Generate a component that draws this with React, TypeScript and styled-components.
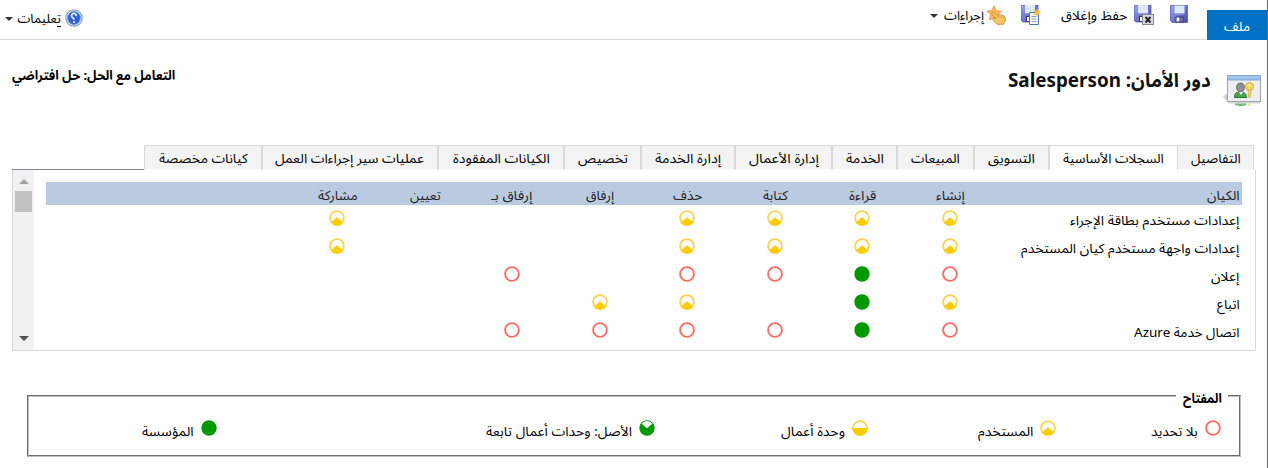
import React, { useLayoutEffect, useRef } from "react";
import styled, { createGlobalStyle } from "styled-components";

const Global = createGlobalStyle`
  * { box-sizing: border-box; }
  body { margin: 0; background: #fff; color: #000; overflow: hidden;
    font-family: "Segoe UI", "Noto Sans", "Noto Sans Arabic", "DejaVu Sans", sans-serif; font-size: 12px; }
`;

const Slot = styled.span<{ $w: number }>`
  display: block;
  flex: none;
  width: ${(p) => p.$w}px;
  white-space: nowrap;
`;
const Ink = styled.span<{ $bold?: boolean; $size?: number }>`
  display: inline-block;
  transform-origin: right center;
  line-height: 20px;
  font-size: ${(p) => p.$size ?? 13}px;
  font-weight: ${(p) => (p.$bold ? 700 : 400)};
`;
const AccessKey = styled.span`
  text-decoration: underline;
  text-underline-offset: 3px;
  text-decoration-skip-ink: none;
`;

/* A label condensed to the width of its slot. */
function Label({ w, bold, size, children }: { w: number; bold?: boolean; size?: number; children: React.ReactNode }) {
  const ref = useRef<HTMLSpanElement>(null);
  useLayoutEffect(() => {
    const el = ref.current;
    if (el) el.style.transform = `scaleX(${w / el.offsetWidth})`;
  }, [w]);
  return (
    <Slot $w={w}>
      <Ink ref={ref} $bold={bold} $size={size}>{children}</Ink>
    </Slot>
  );
}

const Page = styled.div`
  width: 1268px;
  height: 468px;
  border-right: 1px solid #686868;
  direction: rtl;
  display: flex;
  flex-direction: column;
`;
const Ribbon = styled.header`
  height: 40px;
  flex: none;
  display: flex;
  border-bottom: 1px solid #d9d9d9;
`;
const FileTab = styled.div`
  width: 60px;
  height: 30px;
  margin-top: 10px;
  padding: 6px 17px 0;
  background: #0072c6;
  color: #fff;
`;
const Tool = styled.div<{ $before: number; $gap?: number }>`
  display: flex;
  align-items: flex-start;
  gap: ${(p) => p.$gap ?? 6}px;
  margin-right: ${(p) => p.$before}px;
  padding-top: 5px;
  height: 32px;
`;
const Help = styled(Tool)`
  margin-right: auto;
  margin-left: 5px;
  padding-top: 8px;
`;
const HelpDrop = styled.span`
  padding-top: 1px;
`;
const Caret = styled.span<{ $top: number }>`
  border: 4px solid transparent;
  border-top: 4px solid #333;
  border-bottom: 0;
  margin-top: ${(p) => p.$top}px;
`;
const TitleBar = styled.div`
  height: 105px;
  flex: none;
  display: flex;
  justify-content: space-between;
  padding: 25px 6px 0 12px;
`;
const TitleGroup = styled.div`
  display: flex;
  gap: 10px;
  color: #111;
`;
const IconDrop = styled.span`
  padding-top: 9px;
`;
const TitleText = styled.div`
  padding-top: 5px;
`;

const Tabs = styled.nav`
  display: flex;
  height: 25px;
  flex: none;
  margin: 0 11px 0 12px;
  padding-right: 2px;
`;
const Tab = styled.div<{ $w: number; $active?: boolean }>`
  width: ${(p) => p.$w}px;
  height: 25px;
  flex: none;
  display: flex;
  justify-content: center;
  padding-top: 2px;
  background: ${(p) => (p.$active ? "#fff" : "#f3f3f3")};
  border: 1px solid #d9d9d9;
  border-bottom: ${(p) => (p.$active ? "0" : "1px solid #fafafa")};
  ${(p) => p.$active && "border-right: 0;"}
`;
const TabsRest = styled.div`
  flex: 1;
  border-bottom: 1px solid #85858f;
`;
const Panel = styled.section`
  height: 181px;
  flex: none;
  margin: 0 11px 0 12px;
  border: 1px solid #d9d9d9;
  border-top: 0;
  display: flex;
`;
const Grid = styled.div`
  flex: 1;
  padding: 12px 13px 0 12px;
`;
const HeadRow = styled.div`
  display: flex;
  height: 23px;
  background: #bacbe1;
  color: #222;
  padding: 3px 2px 0 0;
`;
const Row = styled.div`
  display: flex;
  height: 28px;
`;
const Entity = styled.div<{ $head?: boolean }>`
  width: ${(p) => (p.$head ? 246.4 : 248.4)}px;
  flex: none;
  padding: ${(p) => (p.$head ? 0 : "5px 2.5px 0 0")};
`;
const Cell = styled.div`
  width: 87.5px;
  flex: none;
  display: flex;
  justify-content: center;
  padding-top: 5px;
`;
const HeadCell = styled(Cell)`
  padding-top: 0;
`;
const Scrollbar = styled.div`
  width: 21px;
  background: #f1f1f1;
  display: flex;
  flex-direction: column;
  align-items: center;
  padding: 9px 0 9px;
`;
const Arrow = styled.span<{ $up?: boolean }>`
  border: 5px solid transparent;
  ${(p) => (p.$up ? "border-bottom-color: #a3a3a3; border-top: 0;" : "border-top-color: #505050; border-bottom: 0; margin-top: auto;")}
`;
const Thumb = styled.span`
  width: 17px;
  height: 21px;
  margin-top: 7px;
  background: #c1c1c1;
`;

const Key = styled.fieldset`
  margin: 35px 26px 0 27px;
  height: 71px;
  flex: none;
  padding: 0 18px 0 0;
  min-width: 0;
  border: 2px groove #c0c0c0;
`;
const KeyTitle = styled.legend`
  height: 20px;
  margin-right: -7px;
  padding: 2px 6.5px 0;
`;
const KeyRow = styled.div`
  display: flex;
  padding-top: 14px;
`;
const KeyItem = styled.div<{ $w: number }>`
  width: ${(p) => p.$w}px;
  flex: none;
  display: flex;
  gap: 7px;
`;
const KeyLabel = styled.div`
  padding-top: 1px;
`;

type Level = "none" | "user" | "unit" | "parent" | "org";

function Dot({ level }: { level: Level }) {
  return (
    <svg width="16" height="16" viewBox="0 0 16 16">
      {level === "none" && <circle cx="8" cy="8" r="6.9" fill="#fff" stroke="#ff6d68" strokeWidth="1.9" />}
      {(level === "user" || level === "unit") && <circle cx="8" cy="8" r="6.9" fill="#fff" stroke="#ffd34f" strokeWidth="1.8" />}
      {level === "user" && <path d="M8 7.4 13.900 12.700A7.700 7.700 0 0 1 2.100 12.700Z" fill="#fc0" stroke="#fc0" strokeWidth=".6" />}
      {level === "unit" && <path d="M.3 8H15.700A7.700 7.700 0 0 1 .3 8Z" fill="#fc0" />}
      {(level === "org" || level === "parent") && <circle cx="8" cy="8" r="7.700" fill="#090" />}
      {level === "parent" && <path d="M8 8.200 2.600 3.700A6.700 6.700 0 0 1 13.400 3.700Z" fill="#fff" />}
    </svg>
  );
}

function Disk() {
  return (
    <g>
      <path d="M0 0H17V17H2L0 15Z" fill="url(#diskFill)" stroke="#5559b4" strokeWidth=".8" />
      <rect x="4" y="0" width="10" height="8" fill="#dfe8f8" />
      <path d="M4 8.500h10" stroke="#8d99d8" />
      <rect x="5" y="11" width="8" height="6" fill="#343b77" />
      <rect x="6" y="12" width="3" height="4" fill="#fff" />
      <rect x="10" y="12" width="2" height="4" fill="#8087bd" />
    </g>
  );
}
const DiskGradient = () => (
  <defs>
    <linearGradient id="diskFill" x1="0" y1="0" x2="1" y2="1">
      <stop stopColor="#9caaf0" />
      <stop offset="1" stopColor="#4345ae" />
    </linearGradient>
  </defs>
);
const SaveIcon = () => (
  <svg width="18" height="18" viewBox="-.5 -.5 18 18"><DiskGradient /><Disk /></svg>
);
const SaveCloseIcon = () => (
  <svg width="20" height="20" viewBox="0 0 20 20">
    <Disk />
    <rect x="8.500" y="9.500" width="11" height="10" fill="#d5d9dd" stroke="#858b92" />
    <path d="m11.500 12 5 5.500M16.500 12l-5 5.500" stroke="#222" strokeWidth="1.900" />
  </svg>
);
const SaveNewIcon = () => (
  <svg width="20" height="20" viewBox="0 0 20 20">
    <Disk />
    <path d="M8.500 7.500h9v12h-9z" fill="#f4f8fd" stroke="#58759f" />
    <path d="M10.500 11.500h5m-5 2.500h5m-5 2.500h5" stroke="#7fa0cd" />
    <path d="m16 3 1 2.800 3-.3-2 2 2 2.500-3-.6-1 2.600-1-2.600-3 .6 2-2.500-2-2 3 .3Z" fill="#f7bd4c" />
  </svg>
);
const ActionsIcon = () => (
  <svg width="20" height="20" viewBox="0 0 20 20">
    <path d="m7 .8 2 5 5.500.2-4 4 1.500 5-5-2.700L2.500 15l1-5.500L0 6l5-.4Z" fill="#ffb860" stroke="#e98d2e" strokeWidth=".8" />
    <path d="M5 7.500c1-1 2 0 3.500 1.800l2 1.400 1-1.200 1.700.6 1-.4 1.500 1 1-.2c1.500 1 1.800 3 1.600 5l-1.800 3.700H10L5.500 14l1-1 2.500.6L5 9Z" fill="#f3c862" stroke="#c38a32" strokeWidth=".9" />
    <path d="M11.500 11v2m2.500-2v2m2.300-1.500v1.500" stroke="#c38a32" strokeWidth=".7" />
  </svg>
);
const HelpIcon = () => (
  <svg width="18" height="18" viewBox="0 0 18 18">
    <circle cx="9" cy="9" r="8.200" fill="#e3eaf4" stroke="#8fa5c4" strokeWidth="1.200" />
    <circle cx="9" cy="9" r="6.400" fill="#2c62d6" stroke="#5e8ce6" strokeWidth=".8" />
    <path d="M11.300 7.200A2.400 2.400 0 1 0 6.600 7.400C7 9 9 8.600 9 10.700" fill="none" stroke="#e4edff" strokeWidth="1.800" />
    <circle cx="9" cy="13" r="1.100" fill="#fff" />
  </svg>
);
const RoleIcon = () => (
  <svg width="40" height="34" viewBox="0 0 40 34">
    <defs>
      <linearGradient id="barFill" x1="0" y1="0" x2="0" y2="1">
        <stop stopColor="#6f9cd2" /><stop offset=".35" stopColor="#b5d0f0" /><stop offset="1" stopColor="#7fa9dc" />
      </linearGradient>
      <linearGradient id="shade" x1="0" y1="0" x2="1" y2="0">
        <stop stopColor="#fff" /><stop offset="1" stopColor="#bbb" />
      </linearGradient>
    </defs>
    <path d="M0 23 7 19v8Z" fill="url(#shade)" />
    <rect x="6.500" y="1.500" width="33" height="26" fill="#eceff1" stroke="#a0a3a7" />
    <rect x="7" y="1" width="32" height="5.500" fill="url(#barFill)" />
    <path d="M13.500 23.500c0-4.500 2-5.500 5.500-5.500s6.500 1 6.500 5.500Z" fill="#48a64b" stroke="#277a36" />
    <path d="m18 18 2 3 2-3" fill="#fff" />
    <ellipse cx="19.500" cy="13.300" rx="3.800" ry="4.300" fill="#8d9490" stroke="#656b68" />
    <circle cx="28.500" cy="12.500" r="4" fill="#f6d75e" stroke="#d4ad3f" />
    <path d="M27.200 16h2.600v6l-1.300 2-1.500-2 1-1-1-1 .2-1Z" fill="#f6d75e" stroke="#d4ad3f" strokeWidth=".8" />
    <circle cx="28.500" cy="11" r="1" fill="#fff" />
    <rect x="7" y="28" width="32" height="1.500" fill="#d3d5d7" />
    <path d="M13.500 29.500h12c0 1.800-2 2.500-5.500 2.500s-6.500-.7-6.500-2.500Z" fill="#63b566" opacity=".9" />
    <path d="M27 29.500h3v2.500h-3z" fill="#f1dd8b" opacity=".8" />
  </svg>
);

const tabs: [string, number, number][] = [
  ["التفاصيل", 77, 50],
  ["السجلات الأساسية", 128, 101],
  ["التسويق", 75, 47],
  ["المبيعات", 77, 49],
  ["الخدمة", 65, 38],
  ["إدارة الأعمال", 97, 70],
  ["إدارة الخدمة", 94, 66],
  ["تخصيص", 77, 50],
  ["الكيانات المفقودة", 126, 97],
  ["عمليات سير إجراءات العمل", 176, 149],
  ["كيانات مخصصة", 118, 89],
];
const columns: [string, number][] = [
  ["إنشاء", 29], ["قراءة", 27], ["كتابة", 25], ["حذف", 29],
  ["إرفاق", 28], ["إرفاق بـ", 41], ["تعيين", 31], ["مشاركة", 40],
];
const rows: [string, number, (Level | null)[]][] = [
  ["إعدادات مستخدم بطاقة الإجراء", 169, ["user", "user", "user", "user", null, null, null, "user"]],
  ["إعدادات واجهة مستخدم كيان المستخدم", 218, ["user", "user", "user", "user", null, null, null, "user"]],
  ["إعلان", 28, ["none", "org", "none", "none", null, "none", null, null]],
  ["اتباع", 23, ["user", "org", null, "user", "user", null, null, null]],
  ["اتصال خدمة Azure", 106, ["none", "org", "none", "none", "none", "none", null, null]],
];
const legend: [Level, string, number, number][] = [
  ["none", "بلا تحديد", 47, 165],
  ["user", "المستخدم", 55, 188],
  ["unit", "وحدة أعمال", 64, 213],
  ["parent", "الأصل: وحدات أعمال تابعة", 146, 438],
  ["org", "المؤسسة", 52, 90],
];

export default function App() {
  return (
    <Page>
      <Global />
      <Ribbon>
        <FileTab><Label w={26}>ملف</Label></FileTab>
        <Tool $before={19}><SaveIcon /></Tool>
        <Tool $before={16}><SaveCloseIcon /><Label w={67}>حفظ وإغلاق</Label></Tool>
        <Tool $before={20}><SaveNewIcon /></Tool>
        <Tool $before={14} $gap={3}>
          <ActionsIcon /><Label w={40}>إجرا<AccessKey>ء</AccessKey>ات</Label><span /><Caret $top={9} />
        </Tool>
        <Help $before={0} $gap={4}>
          <HelpDrop><HelpIcon /></HelpDrop><Label w={44}><AccessKey>ت</AccessKey>عليمات</Label><Caret $top={9} />
        </Help>
      </Ribbon>
      <TitleBar>
        <TitleGroup>
          <IconDrop><RoleIcon /></IconDrop>
          <TitleText><Label w={203} bold size={19}>دور الأمان: Salesperson</Label></TitleText>
        </TitleGroup>
        <Label w={163} bold>التعامل مع الحل: حل افتراضي</Label>
      </TitleBar>
      <Tabs>
        {tabs.map(([name, w, tw], i) => (
          <Tab key={name} $w={w} $active={i === 1}><Label w={tw}>{name}</Label></Tab>
        ))}
        <TabsRest />
      </Tabs>
      <Panel>
        <Grid>
          <HeadRow>
            <Entity $head><Label w={33}>الكيان</Label></Entity>
            {columns.map(([name, w]) => <HeadCell key={name}><Label w={w}>{name}</Label></HeadCell>)}
          </HeadRow>
          {rows.map(([name, w, levels]) => (
            <Row key={name}>
              <Entity><Label w={w}>{name}</Label></Entity>
              {levels.map((l, i) => <Cell key={i}>{l && <Dot level={l} />}</Cell>)}
            </Row>
          ))}
        </Grid>
        <Scrollbar><Arrow $up /><Thumb /><Arrow /></Scrollbar>
      </Panel>
      <Key>
        <KeyTitle><Label w={39} bold>المفتاح</Label></KeyTitle>
        <KeyRow>
          {legend.map(([level, name, tw, w]) => (
            <KeyItem key={level} $w={w}>
              <Dot level={level} /><KeyLabel><Label w={tw}>{name}</Label></KeyLabel>
            </KeyItem>
          ))}
        </KeyRow>
      </Key>
    </Page>
  );
}
